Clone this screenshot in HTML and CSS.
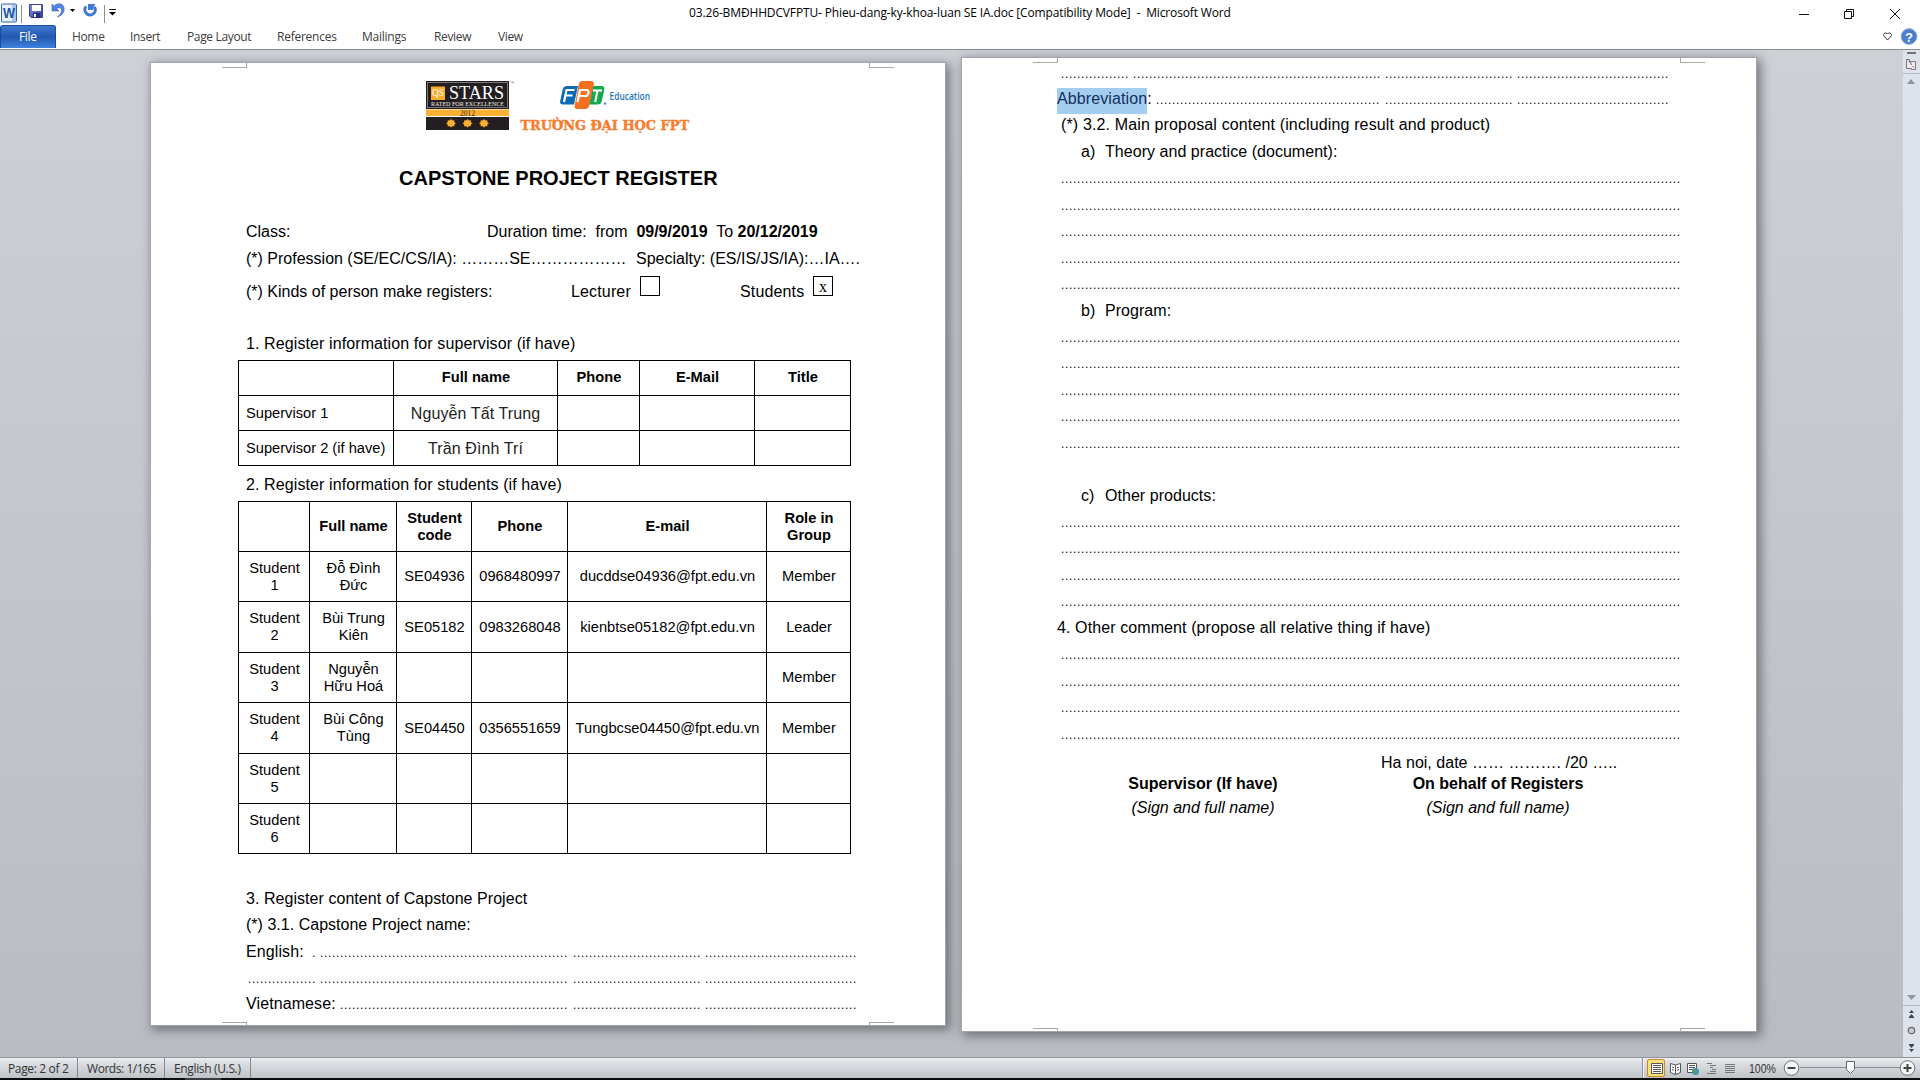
FILE: index.html
```html
<!DOCTYPE html>
<html lang="en">
<head>
<meta charset="utf-8">
<title>Phieu-dang-ky-khoa-luan SE IA.doc - Microsoft Word</title>
<link rel="stylesheet" href="styles.css">
</head>
<body>
<header class="titlebar">
  <svg class="quick" width="130" height="26" viewBox="0 0 130 26">
    <defs>
      <linearGradient id="save" x1="0" y1="0" x2="1" y2="1"><stop offset="0" stop-color="#8c8fe8"/><stop offset="1" stop-color="#3035a0"/></linearGradient>
    </defs>
    <rect x="1.5" y="4" width="15" height="18" rx="1" fill="#e8f1fc" stroke="#2c62a8"/>
    <rect x="12" y="5" width="4" height="16" fill="#a9c8ee"/>
    <text x="3" y="17.500" class="w-glyph" textLength="12" lengthAdjust="spacingAndGlyphs">W</text>
    <path d="M21.500 5v18" stroke="#8f8f8f"/>
    <path d="M29.500 4.500h13v13h-11.500l-1.500-1.500z" fill="url(#save)" stroke="#3a3f9f"/>
    <path d="M32 5h9v6h-9z" fill="#fff"/><path d="M33 13h7v5h-7z" fill="#27307c"/><path d="M34 14h2v3h-2z" fill="#fff"/>
    <path d="M52 4v7h7l-2.300-2.300c3-2.500 6 0 4.500 3.500-.7 1.800-2 3.300-4 4.800 4-1 7-4 7-8 0-5.500-6.500-7-10-3z" fill="#4f86dd" stroke="#2e62bd" stroke-width=".6"/>
    <path d="M70 9h5l-2.500 3z" fill="#000"/>
    <path d="M86 6.500A5.200 5.200 0 1 0 94.500 7" fill="none" stroke="#3f79d4" stroke-width="3"/>
    <path d="M88 4h7l-2 6h-5z" fill="#3f79d4"/>
    <path d="M104.500 5v18" stroke="#8f8f8f"/>
    <path d="M109 9.500h7" stroke="#000"/><path d="M109 12h7l-3.500 3.500z" fill="#000"/>
  </svg>
  <div class="doc-title">03.26-BMĐHHDCVFPTU- Phieu-dang-ky-khoa-luan SE IA.doc [Compatibility Mode]&nbsp; -&nbsp; Microsoft Word</div>
  <svg class="winbtns" width="125" height="26" viewBox="0 0 125 26" fill="none" stroke="#111">
    <path d="M4 14.500h10"/>
    <path d="M49.500 11.500h7v7h-7zM51.500 11.500v-2h7v7h-2"/>
    <path d="M95 9l10 10M105 9l-10 10"/>
  </svg>
</header>
<nav class="ribbon">
  <div class="tab file">File</div>
  <div class="tab home">Home</div>
  <div class="tab insert">Insert</div>
  <div class="tab layout">Page Layout</div>
  <div class="tab refs">References</div>
  <div class="tab mail">Mailings</div>
  <div class="tab review">Review</div>
  <div class="tab view">View</div>
  <svg class="ribbon-end" width="40" height="23" viewBox="0 0 40 23">
    <path d="M7.500 15l-4-4.500v-1l1.500-1.500h1.500l1 1 1-1h1.500l1.500 1.500v1z" fill="#fff" stroke="#333"/>
    <circle cx="29" cy="11.500" r="7.800" fill="#4a7fce" stroke="#7c9fd6"/>
    <text x="29" y="16.500" class="help-glyph" text-anchor="middle">?</text>
  </svg>
</nav>
<main class="workspace">
  <div class="canvas">
    <article class="page page-one">
      <i class="mark tl"></i><i class="mark tr"></i><i class="mark bl"></i><i class="mark br"></i>
      <svg class="logos" width="280" height="60" viewBox="0 0 280 60">
        <rect x="6" y="5" width="83" height="28" fill="#231f20"/>
        <rect x="7.500" y="6.500" width="80" height="25" fill="none" stroke="#777"/>
        <rect x="6" y="33.500" width="83" height="6.500" fill="#fbb034"/>
        <rect x="6" y="41" width="83" height="13" fill="#231f20"/>
        <rect x="11" y="10.500" width="14" height="13.500" fill="#fbab2c"/>
        <text x="12" y="20" class="serif qs" textLength="12" lengthAdjust="spacingAndGlyphs">QS</text>
        <text x="29" y="23" class="serif stars" textLength="55" lengthAdjust="spacingAndGlyphs">STARS</text>
        <text x="11" y="29.600" class="serif rated" textLength="73" lengthAdjust="spacingAndGlyphs">RATED FOR EXCELLENCE</text>
        <text x="40" y="39.500" class="serif year" textLength="15" lengthAdjust="spacingAndGlyphs">2012</text>
        <text x="90" y="8" class="tm">™</text>
        <g fill="#fbb034">
          <path id="star" d="M31 43l1.300 1.600 2-.4v2l1.700 1.100-1.700 1.200v2l-2-.4-1.300 1.600-1.300-1.600-2 .4v-2l-1.700-1.200 1.700-1.100v-2l2 .4z"/>
          <use href="#star" x="16.500"/><use href="#star" x="33"/>
        </g>
        <path d="M147 10h11l-4 18.500h-11q-3.500 0-2.800-3.500l2.500-11.500q.8-3.500 4.300-3.500z" fill="#0b6ab4"/>
        <path d="M173 10h8.500q3.500 0 2.800 3.500l-2.500 11.500q-.8 3.500-4.300 3.500h-8.500z" fill="#16a94c"/>
        <path d="M162 5h9q3.500 0 2.800 3.500l-4.500 21q-.8 3.500-4.300 3.500h-7.500q-3.500 0-2.800-3.500l4-21q.8-3.500 3.300-3.500z" fill="#f37021"/>
        <g fill="none" stroke="#fff" stroke-width="2.200">
          <path d="M144 26l2.500-12h8M145.500 19.500h7"/>
          <path d="M157.500 26l2.500-12h6.500q2.500 0 2 2.500-.6 3.500-3 3.500h-6"/>
          <path d="M173 14.500h9M177.500 14.500l-2.300 11.500"/>
        </g>
        <circle cx="185" cy="27.500" r="1.300" fill="#4f94ca"/>
        <text x="189.500" y="24" class="edu" textLength="40.500" lengthAdjust="spacingAndGlyphs">Education</text>
        <text x="100.500" y="53.500" class="uni" textLength="168.500" lengthAdjust="spacingAndGlyphs">TRƯỜNG ĐẠI HỌC FPT</text>
      </svg>
      <h1>CAPSTONE PROJECT REGISTER</h1>
      <p class="line row-class"><span>Class:</span><span>Duration time:&nbsp; from&nbsp; <b>09/9/2019</b>&nbsp; To <b>20/12/2019</b></span></p>
      <p class="line row-prof"><span>(*) Profession (SE/EC/CS/IA): ………SE………………</span><span>Specialty: (ES/IS/JS/IA):…IA….</span></p>
      <p class="line row-kinds"><span>(*) Kinds of person make registers:</span><span>Lecturer</span><span class="box"></span><span>Students</span><span class="box">x</span></p>
      <p class="line row-one">1. Register information for supervisor (if have)</p>
      <div class="grid supervisors">
        <div></div><div class="th">Full name</div><div class="th">Phone</div><div class="th">E-Mail</div><div class="th">Title</div>
        <div class="left">Supervisor 1</div><div class="person">Nguyễn Tất Trung</div><div></div><div></div><div></div>
        <div class="left">Supervisor 2 (if have)</div><div class="person">Trần Đình Trí</div><div></div><div></div><div></div>
      </div>
      <p class="line row-two">2. Register information for students (if have)</p>
      <div class="grid students">
        <div></div><div class="th">Full name</div><div class="th">Student<br>code</div><div class="th">Phone</div><div class="th">E-mail</div><div class="th">Role in<br>Group</div>
        <div>Student<br>1</div><div>Đỗ Đình<br>Đức</div><div>SE04936</div><div>0968480997</div><div>ducddse04936@fpt.edu.vn</div><div>Member</div>
        <div>Student<br>2</div><div>Bùi Trung<br>Kiên</div><div>SE05182</div><div>0983268048</div><div>kienbtse05182@fpt.edu.vn</div><div>Leader</div>
        <div>Student<br>3</div><div>Nguyễn<br>Hữu Hoá</div><div></div><div></div><div></div><div>Member</div>
        <div>Student<br>4</div><div>Bùi Công<br>Tùng</div><div>SE04450</div><div>0356551659</div><div>Tungbcse04450@fpt.edu.vn</div><div>Member</div>
        <div>Student<br>5</div><div></div><div></div><div></div><div></div><div></div>
        <div>Student<br>6</div><div></div><div></div><div></div><div></div><div></div>
      </div>
      <p class="line row-three">3. Register content of Capstone Project</p>
      <p class="line tight">(*) 3.1. Capstone Project name:</p>
      <p class="line fill english"><span>English:</span><span class="dots">.</span><span class="dots">..............................................................</span><span class="dots">................................</span><span class="dots">......................................</span></p>
      <p class="line fill blank"><span class="dots">.................</span><span class="dots">..............................................................</span><span class="dots">................................</span><span class="dots">......................................</span></p>
      <p class="line fill viet"><span>Vietnamese:</span><span class="dots">.........................................................</span><span class="dots">................................</span><span class="dots">......................................</span></p>
    </article>
    <article class="page page-two">
      <i class="mark tl"></i><i class="mark tr"></i><i class="mark bl"></i><i class="mark br"></i>
      <p class="line fill top"><span class="dots">.................</span><span class="dots">..............................................................</span><span class="dots">................................</span><span class="dots">......................................</span></p>
      <p class="line fill abbr"><span><mark>Abbreviation</mark>:</span><span class="dots">........................................................</span><span class="dots">................................</span><span class="dots">......................................</span></p>
      <p class="line in-one">(*) 3.2. Main proposal content (including result and product)</p>
      <p class="line item"><span>a)</span><span>Theory and practice (document):</span></p>
      <p class="line dots full">...........................................................................................................................................................</p>
      <p class="line dots full">...........................................................................................................................................................</p>
      <p class="line dots full">...........................................................................................................................................................</p>
      <p class="line dots full">...........................................................................................................................................................</p>
      <p class="line dots full">...........................................................................................................................................................</p>
      <p class="line item"><span>b)</span><span>Program:</span></p>
      <p class="line dots full">...........................................................................................................................................................</p>
      <p class="line dots full">...........................................................................................................................................................</p>
      <p class="line dots full">...........................................................................................................................................................</p>
      <p class="line dots full">...........................................................................................................................................................</p>
      <p class="line dots full">...........................................................................................................................................................</p>
      <p class="line"></p>
      <p class="line item"><span>c)</span><span>Other products:</span></p>
      <p class="line dots full">...........................................................................................................................................................</p>
      <p class="line dots full">...........................................................................................................................................................</p>
      <p class="line dots full">...........................................................................................................................................................</p>
      <p class="line dots full">...........................................................................................................................................................</p>
      <p class="line">4. Other comment (propose all relative thing if have)</p>
      <p class="line dots full">...........................................................................................................................................................</p>
      <p class="line dots full">...........................................................................................................................................................</p>
      <p class="line dots full">...........................................................................................................................................................</p>
      <p class="line dots full">...........................................................................................................................................................</p>
      <p class="line place">Ha noi, date …… ………. /20 …..</p>
      <div class="signs">
        <b>Supervisor (If have)</b><b>On behalf of Registers</b>
        <em>(Sign and full name)</em><em>(Sign and full name)</em>
      </div>
    </article>
  </div>
  <aside class="scroll">
    <svg width="17" height="40" viewBox="0 0 17 40">
      <path d="M4 3h9" stroke="#6f7479" stroke-width="2"/>
      <path d="M3.500 9.500h3v2h6v8h-4v-1h-5z" fill="#f3e9ec" stroke="#777c82"/><path d="M4 9l7 9M7 13h3" stroke="#555" stroke-dasharray="1.500 1.500"/>
      <path d="M0 23.500h17" stroke="#b4b9c4"/>
      <path d="M4 34l4-5 4 5z" fill="#8a979b"/>
    </svg>
    <svg width="17" height="64" viewBox="0 0 17 64">
      <path d="M4 2h9l-4.500 5z" fill="#8a979b"/>
      <path d="M0 12.500h17" stroke="#b4b9c4"/>
      <g fill="#3f4448"><path d="M6 20l2.500-3 2.500 3zM6 24l2.500-3 2.500 3zM6 24h5v1H6z"/><path d="M6 51h5v1H6zM6 52l2.500 3 2.500-3zM6 56h5l-2.500 3z"/></g>
      <circle cx="8.500" cy="37.500" r="3.200" fill="#c9ccd2" stroke="#666" stroke-width="1.200"/>
    </svg>
  </aside>
</main>
<footer class="status">
  <div class="cell pages">Page: 2 of 2</div>
  <div class="cell words">Words: 1/165</div>
  <div class="cell lang">English (U.S.)</div>
  <svg class="tools" width="278" height="21" viewBox="0 0 278 21">
    <path d="M.5 0v21" stroke="#8e9298"/><path d="M1.500 0v21" stroke="#f3f4f6"/>
    <rect x="5.500" y="1.500" width="17" height="17" rx="1.500" fill="#fbe07a" stroke="#c28a30"/>
    <g fill="none" stroke="#555">
      <path d="M9.500 5.500h11v10h-11z" fill="#fff"/><path d="M11 7.500h8M11 9.500h8M11 11.500h8M11 13.500h8"/>
      <path d="M28.500 5.500l5 1.500 5-1.500v9l-5 2-5-2zM33.500 7v9" fill="#fff"/><path d="M30 9l2 .7M30 11.500l2 .7M37 9l-2 .7M37 11.500l-2 .7"/>
      <path d="M45.500 5.500h9v9h-9z" fill="#fff"/><path d="M47 7.500h6M47 9.500h6M47 11.500h6"/>
      <path d="M65 5.500h5M68 7.500h6M68 9.500h3M70 11.500h4M68 13.500h6M65 15.500h9" stroke="#777"/>
      <path d="M83 6.500h10M83 8.500h10M83 10.500h10M83 12.500h10M83 14.500h10" stroke="#777"/>
    </g>
    <circle cx="53.500" cy="13.500" r="3.500" fill="#3f8fc4"/><path d="M51 13q3-3 4 0t-2 3z" fill="#55a34a"/>
    <text x="107" y="14.500" class="zoom-text" textLength="27" lengthAdjust="spacingAndGlyphs">100%</text>
    <path d="M158 9.500h101" stroke="#8c9096"/>
    <circle cx="149.500" cy="10" r="7.300" fill="#f4f5f7" stroke="#707479"/><path d="M145.500 10h8" stroke="#444" stroke-width="2"/>
    <path d="M204.500 3.500h8v8l-4 4-4-4z" fill="#fff" stroke="#666"/>
    <circle cx="265.500" cy="10" r="7.300" fill="#f4f5f7" stroke="#707479"/><path d="M261.500 10h8M265.500 6v8" stroke="#444" stroke-width="2"/>
  </svg>
</footer>
<div class="taskbar-edge"><span></span></div>
</body>
</html>
```
FILE: styles.css
```css
* { box-sizing: border-box; }
body {
  margin: 0;
  width: 1920px;
  height: 1080px;
  overflow: hidden;
  display: flex;
  flex-direction: column;
  background: #fff;
  font-family: "Liberation Sans", Arial, sans-serif;
  font-size: 16px;
  color: #000;
}
p, h1 { margin: 0; }

/* window chrome */
.titlebar { display: grid; grid-template-columns: 689px 1fr 125px; height: 25px; }
.doc-title {
  font: 12px/25px "Open Sans", "Noto Sans", sans-serif;
  letter-spacing: -.14px;
  white-space: nowrap;
}
.w-glyph { font: bold 14px "Liberation Sans", sans-serif; fill: #1d56a5; }
.ribbon {
  display: flex;
  height: 25px;
  border-bottom: 1px solid #868b91;
  font: 12px/24px "Open Sans", "Noto Sans", sans-serif;
  color: #3b3b3b;
}
.tab { white-space: nowrap; letter-spacing: -.35px; }
.file {
  width: 56px;
  height: 23px;
  padding-left: 18px;
  margin-right: 16px;
  color: #fff;
  border: 1px solid #1c4a9c;
  border-bottom: 0;
  border-radius: 3px 3px 0 0;
  background: linear-gradient(#3d78cc, #2258ae 50%, #3f83de);
  line-height: 22px;
}
.home { width: 58px; }
.insert { width: 57px; }
.layout { width: 90px; }
.refs { width: 85px; letter-spacing: -.25px; }
.mail { width: 72px; letter-spacing: -.25px; }
.review { width: 64px; }
.ribbon-end { margin-left: auto; }
.help-glyph { font: bold 13px "Liberation Sans", sans-serif; fill: #fff; }

/* document area */
.workspace {
  display: flex;
  height: 1007px;
  background: linear-gradient(#cdd0d5, #b9bcc0);
}
.canvas { display: flex; width: 1903px; padding-left: 151px; gap: 17px; }
.scroll {
  width: 17px;
  display: flex;
  flex-direction: column;
  justify-content: space-between;
  background: #dee2ea;
}
.page {
  position: relative;
  width: 794px;
  background: #fff;
  padding-left: 95px;
  box-shadow: 0 0 0 1px #a2a6ac, 3px 3px 10px 2px rgba(60, 64, 70, .6);
}
.page-one { height: 962px; margin-top: 13px; padding-top: 13px; }
.page-two { height: 973px; margin-top: 8px; padding-top: 1.600px; }
.mark { position: absolute; width: 25px; height: 5px; border: 0 solid #a8a8a8; }
.tl { left: 71px; top: 0; border-width: 0 1px 1px 0; }
.tr { left: 718px; top: 0; border-width: 0 0 1px 1px; }
.bl { left: 71px; bottom: 0; height: 3px; border-width: 1px 1px 0 0; }
.br { left: 718px; bottom: 0; height: 3px; border-width: 1px 0 0 1px; }

/* letterhead */
.logos { display: block; margin-left: 174px; }
.serif { font-family: "Liberation Serif", serif; }
.qs { font-size: 10px; fill: #fff; }
.stars { font-size: 19px; fill: #fff; }
.rated { font-size: 6.500px; fill: #eee; }
.year { font-size: 7.500px; fill: #3a2a10; }
.tm { font: 4px "Liberation Sans", sans-serif; fill: #444; }
.edu { font: 600 11px "Open Sans", sans-serif; fill: #1b75bb; }
.uni { font: bold 13.500px "DejaVu Serif", serif; fill: #f97b2c; stroke: #f97b2c; stroke-width: .4px; }

h1 {
  margin: 27px 0 0 153px;
  font-size: 20px;
  line-height: 30px;
  white-space: nowrap;
}

/* text lines */
.line { height: 26.450px; line-height: 26.450px; white-space: nowrap; letter-spacing: .1px; }
.row-class { display: flex; margin-top: 26.300px; letter-spacing: 0; }
.row-class span:first-child { width: 241px; }
.row-prof { display: flex; letter-spacing: 0; }
.row-prof span:first-child { width: 390px; }
.row-kinds {
  display: grid;
  grid-template-columns: 325px 69px 100px 73px 20px;
  margin-top: 6.700px;
  letter-spacing: 0;
}
.row-kinds span:nth-child(2), .row-kinds span:nth-child(4) { letter-spacing: .15px; }
.box {
  width: 20px;
  height: 20px;
  margin-top: -3px;
  border: 1px solid #000;
  font: 16px/19px "Liberation Serif", serif;
  text-align: center;
}
.row-one { margin-top: 26px; }
.row-two { margin-top: 6px; }
.row-three { margin-top: 31.500px; letter-spacing: .05px; }
.tight, .place { letter-spacing: .02px; }
.dots { font-size: 12px; letter-spacing: .664px; line-height: 29px; }
.fill { display: grid; }
.english { grid-template-columns: 66px 8px 253px 132px 153px; }
.blank { grid-template-columns: 72px 253px 132px 153px; padding-left: 2px; }
.viet { grid-template-columns: 94px 233px 132px 153px; }
.top { grid-template-columns: 72px 252px 132px 153px; padding-left: 4px; }
.abbr { grid-template-columns: 99px 229px 132px 153px; }
.full { width: 621px; margin-left: 4px; }
.in-one { padding-left: 4px; letter-spacing: .14px; }
.item { display: grid; grid-template-columns: 24px 1fr; padding-left: 24px; letter-spacing: .04px; }
mark {
  display: inline-block;
  height: 28px;
  background: linear-gradient(transparent 2px, #a3cdf1 2px);
  color: #12305a;
}
.place { padding-left: 324px; margin-top: 3px; }
.signs {
  display: grid;
  grid-template-columns: 292px 298px;
  width: 590px;
  margin-top: -4.500px;
  line-height: 24px;
  white-space: nowrap;
  text-align: center;
}

/* tables */
.grid {
  display: grid;
  width: 613px;
  margin: 3px 0 0 -8px;
  border: solid #000;
  border-width: 1px 0 0 1px;
  font-size: 14.670px;
  line-height: 17px;
}
.grid > div {
  display: flex;
  align-items: center;
  justify-content: center;
  text-align: center;
  border: solid #000;
  border-width: 0 1px 1px 0;
  padding-left: 1px;
  white-space: nowrap;
}
.supervisors {
  grid-template-columns: 155px 164px 82px 115px 96px;
  grid-template-rows: repeat(3, 35px);
  margin-top: 2px;
}
.students {
  grid-template-columns: 71px 87px 75px 96px 199px 84px;
  grid-template-rows: 50px 50px 51px 50px 51px 50px 50px;
}
.grid > .th { font-weight: bold; }
.grid > .left { justify-content: flex-start; padding: 1px 0 0 7px; }
.grid > .person { font-size: 16px; color: #222; letter-spacing: .1px; padding: 2px 0 0; }

/* status bar */
.status {
  display: flex;
  height: 21px;
  border-top: 1px solid #8d9299;
  background: linear-gradient(#f0f2f4, #dfe2e6 15%, #bfc3c7);
  font: 12px/21px "Open Sans", "Noto Sans", sans-serif;
  color: #333;
}
.cell { border-right: 1px solid #85898f; padding-left: 8px; white-space: nowrap; letter-spacing: -.35px; }
.pages { width: 78px; }
.words { width: 87px; padding-left: 9px; letter-spacing: -.45px; }
.lang { width: 86px; padding-left: 9px; }
.tools { margin-left: auto; }
.zoom-text { font: 12px "Liberation Sans", sans-serif; fill: #333; }
.taskbar-edge { height: 2px; background: #0c0c0e; display: flex; }
.taskbar-edge span { width: 36px; margin-left: 185px; background: #3a3a3c; }
```
